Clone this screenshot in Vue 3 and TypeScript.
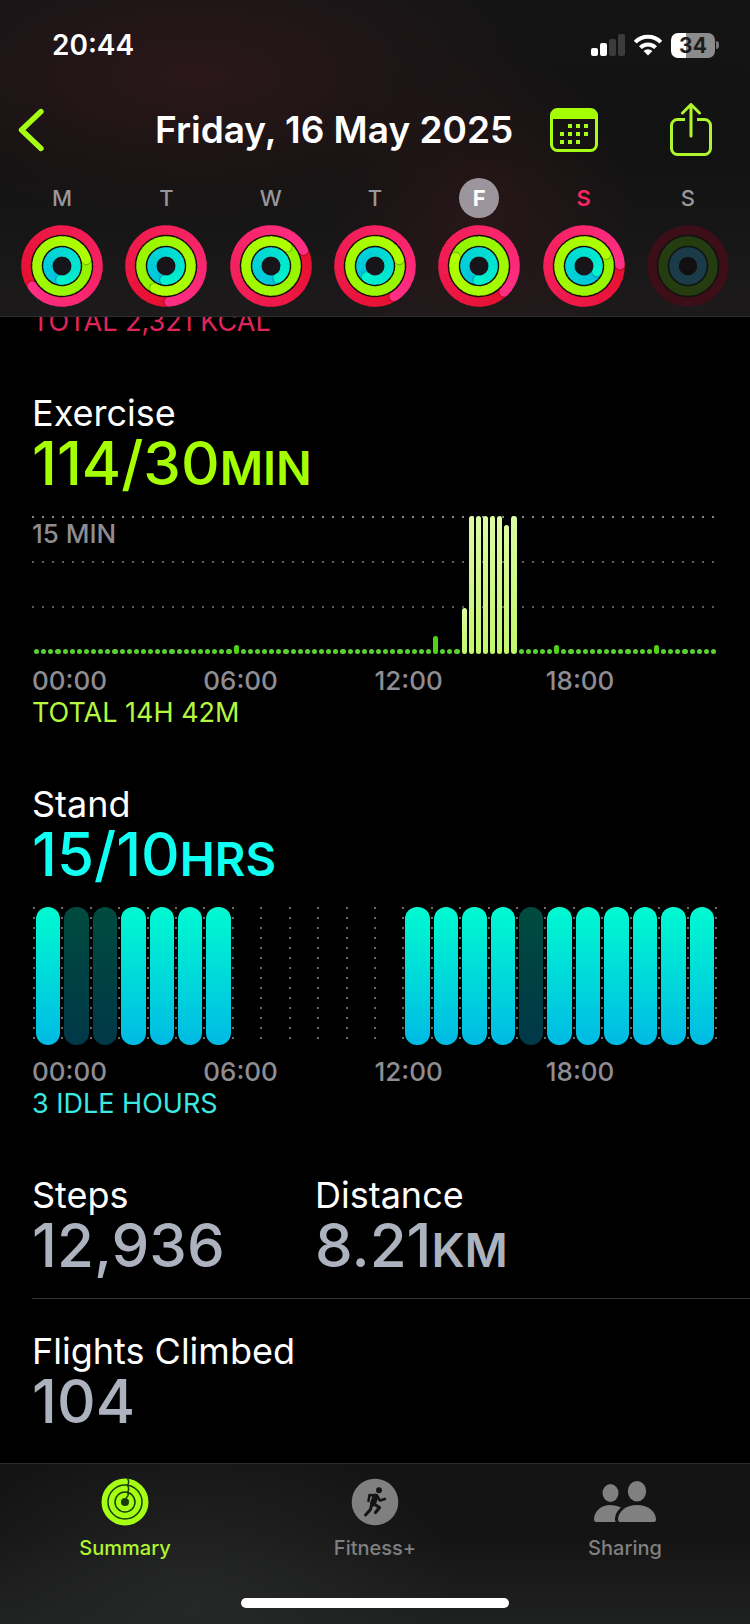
<script setup lang="ts">
type Rgb = [number, number, number]

interface Arc {
  d: string
  color: string
}

interface Band {
  radius: number
  tip: string
  arcs: Arc[]
  capX: number
  capY: number
  shadowX: number
  shadowY: number
}

interface Day {
  letter: string
  name: string
  selected?: boolean
  today?: boolean
  angles?: [number, number, number]
}

const CENTER = 41
const BAND_SPECS: { radius: number; from: Rgb; to: Rgb }[] = [
  { radius: 36, from: [230, 16, 48], to: [255, 46, 132] },
  { radius: 25, from: [146, 244, 0], to: [176, 255, 0] },
  { radius: 14, from: [0, 196, 222], to: [0, 242, 206] },
]

function point(radius: number, degrees: number): [number, number] {
  const a = (degrees * Math.PI) / 180
  return [CENTER + radius * Math.sin(a), CENTER - radius * Math.cos(a)]
}

function mix(from: Rgb, to: Rgb, t: number): string {
  const c = from.map((v, i) => Math.round(v + (to[i] - v) * t))
  return `rgb(${c.join(',')})`
}

function buildBands(angles: [number, number, number]): Band[] {
  const steps = 36
  return BAND_SPECS.map(({ radius, from, to }, i) => {
    const arcs: Arc[] = []
    for (let s = 0; s < steps; s++) {
      const start = angles[i] + (s * 360) / steps
      const end = start + 360 / steps + (s < steps - 1 ? 2 : 0)
      const [x1, y1] = point(radius, start)
      const [x2, y2] = point(radius, end)
      arcs.push({
        d: `M${x1.toFixed(2)} ${y1.toFixed(2)}A${radius} ${radius} 0 0 1 ${x2.toFixed(2)} ${y2.toFixed(2)}`,
        color: mix(from, to, s / (steps - 1)),
      })
    }
    const [capX, capY] = point(radius, angles[i])
    const [shadowX, shadowY] = point(radius, angles[i] + 70 / radius)
    return { radius, tip: mix(from, to, 1), arcs, capX, capY, shadowX, shadowY }
  })
}

const days: Day[] = [
  { letter: 'M', name: 'Monday', angles: [236, 75, 185] },
  { letter: 'T', name: 'Tuesday', angles: [175, 207, 185] },
  { letter: 'W', name: 'Wednesday', angles: [64, 40, 150] },
  { letter: 'T', name: 'Thursday', angles: [148, 75, 218] },
  { letter: 'F', name: 'Friday', selected: true, angles: [136, 290, 184] },
  { letter: 'S', name: 'Saturday', today: true, angles: [88, 62, 114] },
  { letter: 'S', name: 'Sunday' },
]
const week = days.map((day) => ({ ...day, bands: day.angles ? buildBands(day.angles) : [] }))

const hours = ['00:00', '06:00', '12:00', '18:00']

/* Exercise minutes in each quarter hour, as a share of the chart height. */
const activeQuarters: Record<number, number> = {
  28: 6.5, 56: 13, 60: 33.3, 61: 100, 62: 100, 63: 100, 64: 100,
  65: 100, 66: 93.5, 67: 100, 73: 6.5, 87: 6.5,
}
const quarters = Array.from({ length: 96 }, (_, i) => ({
  height: activeQuarters[i] ?? 0,
  intense: i >= 60 && i <= 67,
}))

/* s: stood, i: idle, -: no data */
const standHours = 'siissss------ssssissssss'.split('')
</script>

<template>
  <div class="screen">
    <header class="top">
      <div class="status">
        <span class="clock">20:44</span>
        <div class="indicators">
          <svg class="signal" viewBox="0 0 34 22" aria-hidden="true">
            <rect x="0" y="14" width="7" height="8" rx="2" fill="#fff" />
            <rect x="9" y="9" width="7" height="13" rx="2" fill="#fff" />
            <rect x="18" y="5" width="7" height="17" rx="2" fill="#3c3c3c" />
            <rect x="27" y="0" width="7" height="22" rx="2" fill="#3c3c3c" />
          </svg>
          <svg class="wifi" viewBox="0 0 30 22" aria-hidden="true">
            <g fill="none" stroke="#fff" stroke-width="4">
              <path d="M2.2 8.2A18 18 0 0 1 27.8 8.2" />
              <path d="M7.4 13.6A10.8 10.8 0 0 1 22.6 13.6" />
            </g>
            <path d="M15 21.5L10.6 17.1A6.4 6.4 0 0 1 19.4 17.1Z" fill="#fff" />
          </svg>
          <div class="battery"><span class="cell">34</span><span class="nub"></span></div>
        </div>
      </div>

      <div class="bar">
        <button class="icon-button" aria-label="Back">
          <svg width="26" height="44" viewBox="0 0 26 44" aria-hidden="true">
            <path d="M23 3.5L3.5 22L23 40.5" fill="none" stroke="#a6ff12" stroke-width="5.4" stroke-linecap="round" stroke-linejoin="round" />
          </svg>
        </button>
        <h1 class="title">Friday, 16 May 2025</h1>
        <button class="icon-button calendar" aria-label="Calendar">
          <svg width="48" height="44" viewBox="0 0 48 44" aria-hidden="true">
            <rect x="1.5" y="1.5" width="45" height="41" rx="6" fill="none" stroke="#a6ff12" stroke-width="3" />
            <path d="M1 11V7a6 6 0 0 1 6-6h34a6 6 0 0 1 6 6v4z" fill="#a6ff00" />
            <g fill="#a6ff12">
              <rect x="18" y="16" width="4" height="4" /><rect x="26" y="16" width="4" height="4" /><rect x="34" y="16" width="4" height="4" />
              <rect x="10" y="24" width="4" height="4" /><rect x="18" y="24" width="4" height="4" /><rect x="26" y="24" width="4" height="4" /><rect x="34" y="24" width="4" height="4" />
              <rect x="10" y="32" width="4" height="4" /><rect x="18" y="32" width="4" height="4" /><rect x="26" y="32" width="4" height="4" />
            </g>
          </svg>
        </button>
        <button class="icon-button" aria-label="Share">
          <svg width="42" height="54" viewBox="0 0 42 54" aria-hidden="true">
            <g fill="none" stroke="#adf52c" stroke-width="3" stroke-linecap="round" stroke-linejoin="round">
              <path d="M15 16.5H7.5a6 6 0 0 0-6 6V45.5a6 6 0 0 0 6 6H34.5a6 6 0 0 0 6-6V22.5a6 6 0 0 0-6-6H27" stroke-linecap="butt" />
              <path d="M21 33V1.5M12.5 10L21 1.5L29.5 10" />
            </g>
          </svg>
        </button>
      </div>

      <div class="week">
        <button
          v-for="(day, i) in week"
          :key="i"
          class="day"
          :class="{ selected: day.selected, today: day.today }"
          :aria-label="day.name"
        >
          <span class="letter">{{ day.letter }}</span>
          <svg class="rings" viewBox="0 0 82 82" aria-hidden="true">
            <template v-if="day.bands.length">
              <circle cx="41" cy="41" r="34" fill="#160d05" />
              <g v-for="band in day.bands" :key="band.radius" fill="none" stroke-width="9.5">
                <path v-for="(arc, n) in band.arcs" :key="n" :d="arc.d" :stroke="arc.color" />
                <circle :cx="band.shadowX" :cy="band.shadowY" r="4.7" fill="#000" fill-opacity="0.22" />
                <circle :cx="band.capX" :cy="band.capY" r="4.7" :fill="band.tip" />
              </g>
              <circle cx="41" cy="41" r="9.3" fill="#17151a" />
            </template>
            <g v-else fill="none" stroke-width="9.5">
              <circle cx="41" cy="41" r="34" fill="#101010" />
              <circle cx="41" cy="41" r="36" stroke="#3c0f18" />
              <circle cx="41" cy="41" r="25" stroke="#243c10" />
              <circle cx="41" cy="41" r="14" stroke="#1b3b49" />
            </g>
          </svg>
        </button>
      </div>
    </header>

    <main class="content">
      <p class="total move">TOTAL 2,321 KCAL</p>

      <section class="metric exercise">
        <h2 class="label">Exercise</h2>
        <p class="value">114/30<span class="unit">MIN</span></p>
        <div class="chart minutes">
          <span class="scale">15 MIN</span>
          <div class="quarters">
            <span
              v-for="(q, i) in quarters"
              :key="i"
              class="quarter"
              :class="{ active: q.height > 0, intense: q.intense }"
              :style="{ height: q.height + '%' }"
            ></span>
          </div>
        </div>
        <div class="axis"><span v-for="h in hours" :key="h">{{ h }}</span></div>
        <p class="total">TOTAL 14H 42M</p>
      </section>

      <section class="metric stand">
        <h2 class="label">Stand</h2>
        <p class="value">15/10<span class="unit">HRS</span></p>
        <div class="chart hours">
          <div v-for="(state, i) in standHours" :key="i" class="hour">
            <span v-if="state !== '-'" class="pill" :class="{ idle: state === 'i' }"></span>
          </div>
        </div>
        <div class="axis"><span v-for="h in hours" :key="h">{{ h }}</span></div>
        <p class="total">3 IDLE HOURS</p>
      </section>

      <section class="pair">
        <div class="steps">
          <h2 class="label">Steps</h2>
          <p class="value">12,936</p>
        </div>
        <div>
          <h2 class="label">Distance</h2>
          <p class="value">8.21<span class="unit">KM</span></p>
        </div>
      </section>

      <section class="flights">
        <h2 class="label">Flights Climbed</h2>
        <p class="value">104</p>
      </section>
    </main>

    <footer class="bottom">
      <nav class="tabs">
        <a class="tab current" href="#summary">
          <svg width="48" height="48" viewBox="0 0 48 48" aria-hidden="true">
            <circle cx="24" cy="24" r="23.5" fill="#a6ff12" />
            <g fill="none" stroke="#173c08" stroke-width="1.5">
              <circle cx="24" cy="24" r="17" />
              <circle cx="24" cy="24" r="10" />
              <path d="M26.5 .5Q28.8 4 26.5 7.3Q28.8 11 26.5 14.3Q28.6 17 25 20" />
            </g>
            <circle cx="24" cy="24" r="4" fill="#173c08" />
          </svg>
          <span>Summary</span>
        </a>
        <a class="tab" href="#fitness">
          <svg width="48" height="48" viewBox="0 0 48 48" aria-hidden="true">
            <circle cx="24" cy="24" r="23.3" fill="#808080" />
            <circle cx="28" cy="12.3" r="3" fill="#141414" />
            <g fill="none" stroke="#141414" stroke-linecap="round" stroke-linejoin="round">
              <path d="M24.5 18.5L22 25.5" stroke-width="6" />
              <path d="M24 17.3L18.5 17L17.5 23" stroke-width="2.5" />
              <path d="M26.5 18.5L29 22.5L34 21" stroke-width="2.5" />
              <path d="M23 26L28.5 29.5L24.5 34.5" stroke-width="3.2" />
              <path d="M20.5 27L19.5 31.5L14.5 37" stroke-width="3" />
            </g>
          </svg>
          <span>Fitness+</span>
        </a>
        <a class="tab" href="#sharing">
          <svg width="62" height="48" viewBox="0 0 62 48" aria-hidden="true">
            <g fill="#808080">
              <ellipse cx="16.5" cy="15" rx="8" ry="9" />
              <ellipse cx="43" cy="13.3" rx="9.2" ry="10.2" />
              <path d="M2.5 44Q0 44 0 41.5C0 33 7.5 27 16.5 27Q22.5 27 27 29.5C23.5 32.5 21 36.5 21 41.5Q21 43 21.8 44Z" />
              <path d="M26.5 44Q24 44 24 41.5C24 33 33 27 43 27C53 27 62 33 62 41.5Q62 44 59.5 44Z" />
            </g>
          </svg>
          <span>Sharing</span>
        </a>
      </nav>
      <div class="home"></div>
    </footer>
  </div>
</template>

<style>
body {
  background: #000;
}
</style>

<style scoped>
.screen {
  display: flex;
  flex-direction: column;
  min-height: 100vh;
  overflow: hidden;
  background: #000;
  color: #fff;
  font-family: Inter, "Liberation Sans", sans-serif;
}

h1,
h2,
p {
  margin: 0;
  font-weight: 400;
}

button {
  padding: 0;
  border: 0;
  background: none;
  color: inherit;
  font: inherit;
}

.top {
  position: relative;
  z-index: 1;
  padding-top: 24px;
  padding-bottom: 9px;
  border-bottom: 1px solid #2e2c2e;
  background:
    radial-gradient(ellipse 45% 45% at 26% 24%, rgba(48, 24, 27, 0.8), transparent),
    radial-gradient(ellipse 20% 55% at 64% 70%, rgba(44, 23, 25, 0.8), transparent),
    linear-gradient(#151415, #131212 50%, #1c1a1b);
}

.status {
  display: flex;
  align-items: center;
  justify-content: space-between;
  height: 42px;
  padding: 0 31px 0 52px;
}

.clock {
  font-size: 28px;
  font-weight: 600;
}

.indicators {
  display: flex;
  align-items: center;
  gap: 8px;
}

.signal {
  width: 34px;
  height: 22px;
}

.wifi {
  width: 30px;
  height: 22px;
}

.battery {
  display: flex;
  align-items: center;
  gap: 1px;
}

.cell {
  width: 44px;
  height: 25px;
  border-radius: 7px;
  background: linear-gradient(90deg, #fff 34%, #8c8c8c 34%);
  color: #1c1c1c;
  font-size: 21px;
  font-weight: 700;
  line-height: 25px;
  text-align: center;
}

.nub {
  width: 3px;
  height: 8px;
  border-radius: 0 4px 4px 0;
  background: #777;
}

.bar {
  display: flex;
  align-items: center;
  height: 84px;
  margin-top: 22px;
  padding: 0 38px 0 18px;
}

.icon-button {
  display: flex;
}

.title {
  flex: 1;
  padding-left: 111px;
  font-size: 37px;
  font-weight: 600;
  line-height: 44px;
  white-space: nowrap;
}

.calendar {
  margin-right: 72px;
}

.week {
  display: grid;
  grid-template-columns: repeat(7, 1fr);
  margin-top: 6px;
  padding: 0 10px;
}

.day {
  display: flex;
  flex-direction: column;
  align-items: center;
  gap: 7px;
}

.letter {
  width: 40px;
  height: 40px;
  border-radius: 50%;
  color: #99979b;
  font-size: 22px;
  font-weight: 500;
  line-height: 40px;
}

.selected .letter {
  background: #9c959b;
  color: #fff;
  font-weight: 700;
}

.today .letter {
  color: #fa2460;
  font-weight: 600;
}

.rings {
  width: 82px;
  height: 82px;
}

.content {
  flex: 1;
  padding: 0 33px 34px 32px;
}

.total {
  font-size: 27px;
  font-weight: 400;
  line-height: 32px;
}

.move {
  margin-top: -11px;
  color: #e0245c;
}

.metric,
.pair {
  margin-top: 53px;
}

.label {
  font-size: 36px;
  font-weight: 400;
  line-height: 44px;
}

.value {
  color: #adb2bf;
  font-size: 60px;
  font-weight: 500;
  line-height: 56px;
}

.unit {
  font-size: 47px;
  font-weight: 600;
  line-height: 40px;
}

.exercise .value {
  color: #a6ff00;
}

.exercise .total {
  color: #b4f73c;
}

.stand .value {
  color: #0ffff2;
}

.stand .total {
  color: #3de8e0;
}

.chart {
  height: 138px;
  margin-top: 25px;
}

.minutes {
  display: grid;
  background:
    repeating-linear-gradient(90deg, transparent 0 2px, #000 2px 10px),
    linear-gradient(#8a8a8a 0 2px, transparent 2px 45px, #5c5c5c 45px 47px, transparent 47px 90px, #5c5c5c 90px 92px, transparent 92px);
}

.minutes > * {
  grid-area: 1 / 1;
}

.scale {
  color: #8e8d92;
  font-size: 26px;
  font-weight: 500;
  line-height: 36px;
}

.quarters {
  display: grid;
  grid-template-columns: repeat(96, 1fr);
  align-items: end;
  height: 138px;
  margin-left: 1px;
}

.quarter {
  min-height: 5px;
  margin: 0 1px;
  border-radius: 3px;
  background: #5ad132;
}

.active {
  background: #4fd414;
}

.intense {
  background: linear-gradient(#dcfba4, #c2f76a);
}

.axis {
  display: grid;
  grid-template-columns: repeat(4, 1fr);
  margin-top: 11px;
  color: #8e8d92;
  font-size: 26px;
  font-weight: 500;
  line-height: 32px;
}

.hours {
  --dots: repeating-linear-gradient(#6a6a6a 0 2px, transparent 2px 10px);
  display: grid;
  grid-template-columns: repeat(24, 1fr);
  margin-left: 1px;
  padding-right: 2px;
  background: var(--dots) right top / 2px 134px no-repeat;
}

.hour {
  display: flex;
  padding: 0 1px 0 3px;
  background: var(--dots) left top / 2px 134px no-repeat;
}

.pill {
  flex: 1;
  border-radius: 12px;
  background: linear-gradient(#00fad0, #00bae4);
}

.idle {
  background: linear-gradient(#004b3f, #003848);
}

.pair {
  display: flex;
  margin-right: -33px;
  padding-bottom: 25px;
  border-bottom: 1px solid #363638;
}

.steps {
  width: 283px;
}

.flights {
  margin-top: 30px;
}

.bottom {
  padding: 14px 0 16px;
  border-top: 1px solid #2c2c2c;
  background:
    radial-gradient(ellipse 36% 110% at 26% 90%, #262727, transparent),
    linear-gradient(#141414, #141414 45%, #1f2020);
}

.tabs {
  display: grid;
  grid-template-columns: repeat(3, 1fr);
}

.tab {
  display: flex;
  flex-direction: column;
  align-items: center;
  gap: 8px;
  color: #808080;
  font-size: 20px;
  font-weight: 500;
  line-height: 28px;
  text-decoration: none;
}

.current {
  color: #aef52f;
}

.home {
  width: 268px;
  height: 10px;
  margin: 36px auto 0;
  border-radius: 5px;
  background: #fff;
}
</style>
